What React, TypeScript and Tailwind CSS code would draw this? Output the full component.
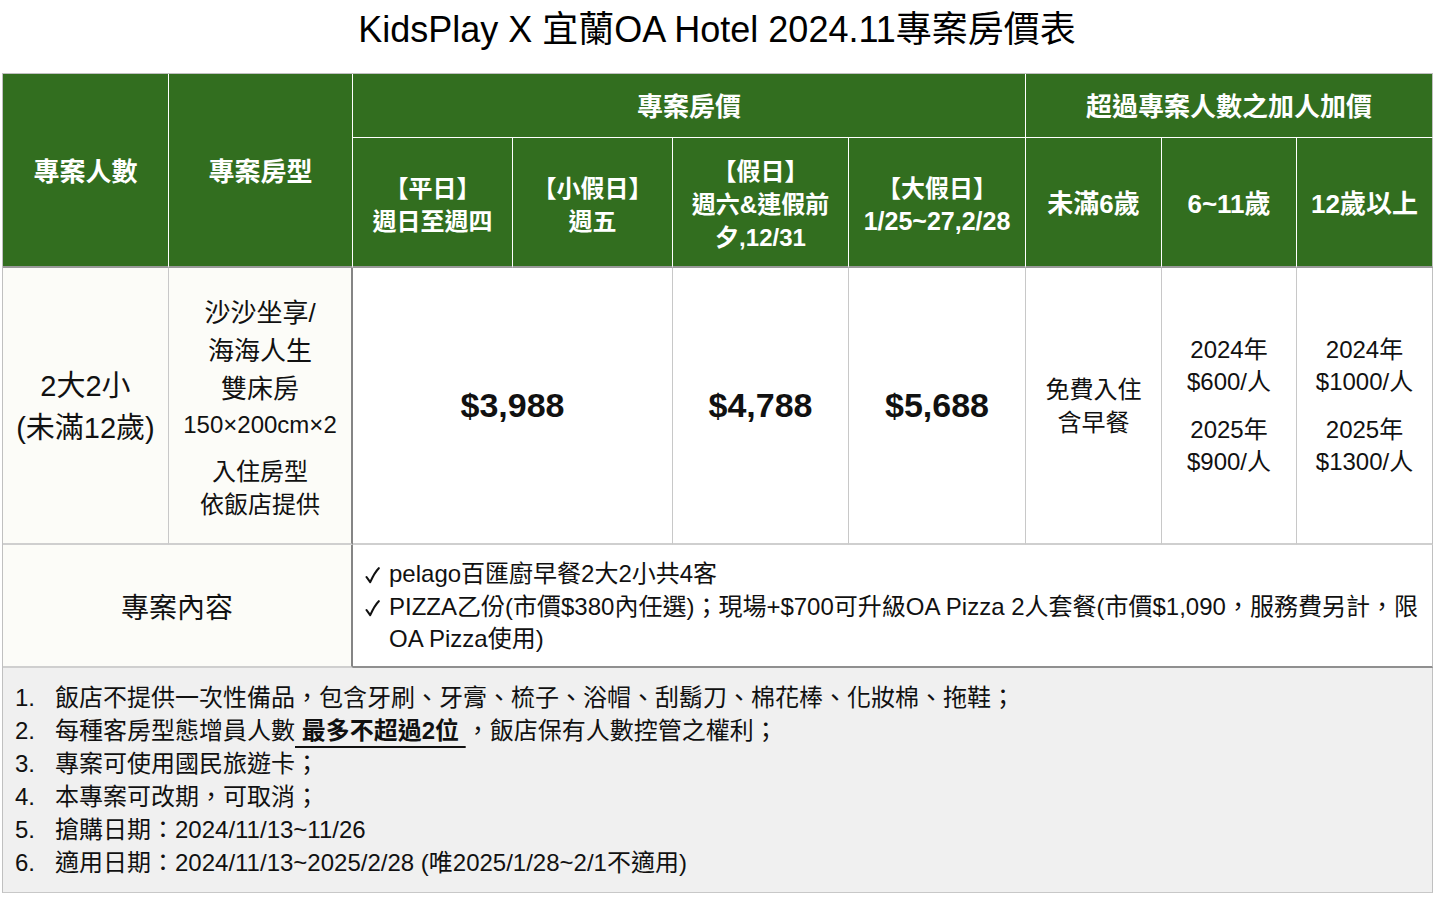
import React from "react";

const G = "bg-[#326e1f]";

function Check() {
  return (
    <span className="w-[24px] flex items-center">
      <svg width="15" height="17" viewBox="0 0 15 17" className="mt-[9px]">
        <path d="M1.5 10 L5.2 15.2 C7.5 10 10 5 13.8 1.2" fill="none" stroke="#111" strokeWidth="2.1" strokeLinecap="round" strokeLinejoin="round" />
      </svg>
    </span>
  );
}

export default function App() {
  return (
    <div className="w-[1434px] h-[898px] bg-white text-[#111] font-['Liberation_Sans','Noto_Sans_CJK_TC',sans-serif] overflow-hidden">
      <div className="h-[73px] text-center text-[36px] leading-[60px] text-black">
        KidsPlay X 宜蘭OA Hotel 2024.11專案房價表
      </div>
      <div className="ml-[2px] w-[1431px] grid grid-cols-[166px_184px_160px_160px_176px_177px_136px_135px_136px] grid-rows-[64px_130px_277px_123px] border-l border-t border-l-[#c0c0c0] border-t-[#c0c0c0]">
        {/* header row 1 */}
        <div className={`${G} row-span-2 border-r border-r-white border-b-2 border-b-[#9a9a9a] pt-[5px] flex items-center justify-center text-white font-bold text-[26px]`}>
          專案人數
        </div>
        <div className={`${G} row-span-2 border-r border-r-white border-b-2 border-b-[#9a9a9a] pt-[5px] flex items-center justify-center text-white font-bold text-[26px]`}>
          專案房型
        </div>
        <div className={`${G} col-span-4 border-r border-r-white border-b border-b-white pt-[3px] flex items-center justify-center text-white font-bold text-[26px]`}>
          專案房價
        </div>
        <div className={`${G} col-span-3 border-r border-r-[#c0c0c0] border-b border-b-white pt-[3px] flex items-center justify-center text-white font-bold text-[26px]`}>
          超過專案人數之加人加價
        </div>
        {/* header row 2 */}
        <div className={`${G} border-r border-r-white border-b-2 border-b-[#9a9a9a] pt-[5px] flex flex-col items-center justify-center text-white font-bold text-[24px] leading-[33px]`}>
          <div>【平日】</div>
          <div>週日至週四</div>
        </div>
        <div className={`${G} border-r border-r-white border-b-2 border-b-[#9a9a9a] pt-[5px] flex flex-col items-center justify-center text-white font-bold text-[24px] leading-[33px]`}>
          <div>【小假日】</div>
          <div>週五</div>
        </div>
        <div className={`${G} border-r border-r-white border-b-2 border-b-[#9a9a9a] pt-[5px] flex flex-col items-center justify-center text-white font-bold text-[24px] leading-[33px]`}>
          <div>【假日】</div>
          <div>週六&amp;連假前</div>
          <div>夕,12/31</div>
        </div>
        <div className={`${G} border-r border-r-white border-b-2 border-b-[#9a9a9a] pt-[5px] flex flex-col items-center justify-center text-white font-bold text-[24px] leading-[33px]`}>
          <div>【大假日】</div>
          <div className="text-[25px]">1/25~27,2/28</div>
        </div>
        <div className={`${G} border-r border-r-white border-b-2 border-b-[#9a9a9a] pt-[4px] flex items-center justify-center text-white font-bold text-[26px]`}>
          未滿6歲
        </div>
        <div className={`${G} border-r border-r-white border-b-2 border-b-[#9a9a9a] pt-[4px] flex items-center justify-center text-white font-bold text-[26px]`}>
          6~11歲
        </div>
        <div className={`${G} border-r border-r-[#c0c0c0] border-b-2 border-b-[#9a9a9a] pt-[4px] flex items-center justify-center text-white font-bold text-[26px]`}>
          12歲以上
        </div>
        {/* body row */}
        <div className="bg-[#fcfcf8] border-r border-r-[#c8c8c8] border-b-2 border-b-[#cfcfcf] pt-[2px] flex flex-col items-center justify-center text-[29px] leading-[42px]">
          <div>2大2小</div>
          <div>(未滿12歲)</div>
        </div>
        <div className="bg-[#fcfcf8] border-r-2 border-r-[#858585] border-b-2 border-b-[#cfcfcf] pt-[3px] flex flex-col items-center justify-center">
          <div className="text-[26px] leading-[38px]">沙沙坐享/</div>
          <div className="text-[26px] leading-[38px]">海海人生</div>
          <div className="text-[26px] leading-[38px]">雙床房</div>
          <div className="text-[24px] leading-[34px]">150×200cm×2</div>
          <div className="mt-[13px] text-[24px] leading-[33px]">入住房型</div>
          <div className="text-[24px] leading-[33px]">依飯店提供</div>
        </div>
        <div className="col-span-2 bg-white border-r border-r-[#c8c8c8] border-b-2 border-b-[#cfcfcf] flex items-center justify-center text-[34px] font-bold">
          $3,988
        </div>
        <div className="bg-white border-r border-r-[#c8c8c8] border-b-2 border-b-[#cfcfcf] flex items-center justify-center text-[34px] font-bold">
          $4,788
        </div>
        <div className="bg-white border-r border-r-[#c8c8c8] border-b-2 border-b-[#cfcfcf] flex items-center justify-center text-[34px] font-bold">
          $5,688
        </div>
        <div className="bg-white border-r border-r-[#c8c8c8] border-b-2 border-b-[#cfcfcf] flex flex-col items-center justify-center text-[24px] leading-[33px]">
          <div>免費入住</div>
          <div>含早餐</div>
        </div>
        <div className="bg-white border-r border-r-[#c8c8c8] border-b-2 border-b-[#cfcfcf] flex flex-col items-center justify-center text-[24px] leading-[32px]">
          <div>2024年</div>
          <div>$600/人</div>
          <div className="mt-[16px]">2025年</div>
          <div>$900/人</div>
        </div>
        <div className="bg-white border-r border-r-[#c0c0c0] border-b-2 border-b-[#cfcfcf] flex flex-col items-center justify-center text-[24px] leading-[32px]">
          <div>2024年</div>
          <div>$1000/人</div>
          <div className="mt-[16px]">2025年</div>
          <div>$1300/人</div>
        </div>
        {/* content row */}
        <div className="col-span-2 bg-[#fcfcf8] border-r-2 border-r-[#858585] border-b-2 border-b-[#cfcfcf] pt-[6px] flex items-center justify-center text-[28px]">
          專案內容
        </div>
        <div className="col-span-7 bg-white border-r border-r-[#c0c0c0] border-b-2 border-b-[#8f8f8f] pt-[3px] flex flex-col justify-center pl-[12px] text-[24px] leading-[32.5px] whitespace-nowrap">
          <div className="flex items-start">
            <Check />
            <span>pelago百匯廚早餐2大2小共4客</span>
          </div>
          <div className="flex items-start">
            <Check />
            <span>
              PIZZA乙份(市價$380內任選)；現場+$700可升級OA Pizza 2人套餐(市價$1,090，服務費另計，限
              <br />
              OA Pizza使用)
            </span>
          </div>
        </div>
      </div>
      {/* notes */}
      <div className="ml-[2px] w-[1431px] h-[225px] bg-[#f0f0f0] border-l border-r border-b border-l-[#c0c0c0] border-r-[#c0c0c0] border-b-[#c8c8c8] pt-[13px] pl-[12px] text-[24px] leading-[33px] whitespace-nowrap">
        {[
          <>飯店不提供一次性備品，包含牙刷、牙膏、梳子、浴帽、刮鬍刀、棉花棒、化妝棉、拖鞋；</>,
          <>
            每種客房型態增員人數
            <span className="font-bold underline decoration-[1.5px] underline-offset-[7px]">{"\u00a0最多不超過2位\u00a0"}</span>
            ，飯店保有人數控管之權利；
          </>,
          <>專案可使用國民旅遊卡；</>,
          <>本專案可改期，可取消；</>,
          <>搶購日期：2024/11/13~11/26</>,
          <>適用日期：2024/11/13~2025/2/28 (唯2025/1/28~2/1不適用)</>,
        ].map((t, i) => (
          <div key={i} className="flex">
            <span className="w-[40px]">{i + 1}.</span>
            <span>{t}</span>
          </div>
        ))}
      </div>
    </div>
  );
}
